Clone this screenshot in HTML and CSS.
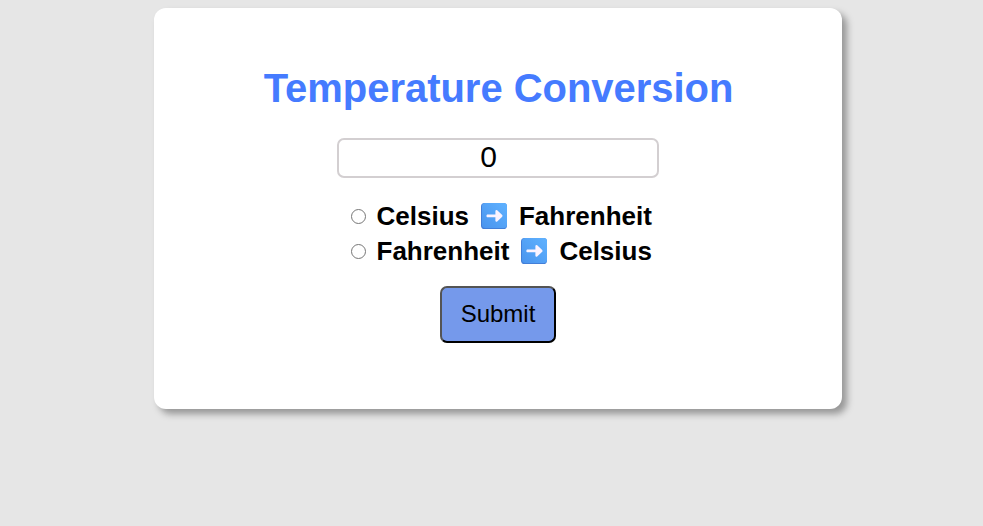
FILE: index.html
```html
<!DOCTYPE html>
<html lang="en">
<head>
<meta charset="UTF-8">
<title>Temperature Conversion</title>
<link rel="stylesheet" href="styles.css">
</head>
<body>
<svg class="defs" width="0" height="0" aria-hidden="true">
  <defs>
    <linearGradient id="tile" x1="1" y1="0" x2="0" y2="1">
      <stop offset="0" stop-color="#5fb2ff"/>
      <stop offset="1" stop-color="#4a94ee"/>
    </linearGradient>
    <symbol id="arrow" viewBox="0 0 26 26">
      <rect width="26" height="26" rx="3.6" fill="#437fd8"/>
      <rect x="1" width="25" height="25" rx="3.2" fill="url(#tile)"/>
      <path d="M6 11.5H14.4V8Q14.7 6.4 16.2 7.3L21.2 12.1Q21.9 12.9 21.2 13.7L16.2 18.5Q14.7 19.4 14.4 17.8V14.3H6Q4.6 12.9 6 11.5Z" fill="#fbf3ff"/>
    </symbol>
  </defs>
</svg>
<form class="card">
  <h1>Temperature Conversion</h1>
  <input class="value" type="number" value="0">
  <label class="option"><input type="radio" name="unit"><span>Celsius</span><svg class="arrow"><use href="#arrow"/></svg><span>Fahrenheit</span></label>
  <label class="option"><input type="radio" name="unit"><span>Fahrenheit</span><svg class="arrow"><use href="#arrow"/></svg><span>Celsius</span></label>
  <button type="button">Submit</button>
</form>
</body>
</html>
```
FILE: styles.css
```css
body {
  box-sizing: border-box;
  min-height: 100vh;
  margin: 0;
  padding-top: 8px;
  background: #e6e6e6;
  font-family: "Liberation Sans", Arial, sans-serif;
}
.defs { position: absolute; }
.card {
  box-sizing: border-box;
  width: 688px;
  height: 401px;
  margin: 0 auto 0 154px;
  padding-top: 57px;
  display: flex;
  flex-direction: column;
  align-items: center;
  background: #fff;
  border-radius: 12px;
  box-shadow: 5px 5px 7px rgba(0, 0, 0, 0.35);
}
h1 {
  margin: 0 0 27px;
  padding-left: 1px;
  font-size: 40px;
  line-height: 46px;
  letter-spacing: -0.04px;
  color: #457bff;
}
.value {
  box-sizing: border-box;
  width: 322px;
  height: 40px;
  margin: 0 0 21px;
  padding: 0 6px 2px 2px;
  border: 2px solid #d3cfd1;
  border-radius: 7px;
  font: 30px "Liberation Sans", Arial, sans-serif;
  text-align: center;
}
.option {
  box-sizing: border-box;
  display: flex;
  align-items: center;
  width: 307px;
  height: 35px;
  padding-left: 6px;
  font-size: 26px;
  font-weight: bold;
}
.option input {
  flex: none;
  width: 15px;
  height: 15px;
  margin: 0 11px 0 0;
}
.arrow {
  flex: none;
  width: 26px;
  height: 26px;
  margin: 0 12.3px 2px 11.7px;
}
button {
  box-sizing: border-box;
  width: 116px;
  height: 57px;
  margin-top: 17px;
  padding: 0 0 2px;
  border: 2px outset #000;
  border-radius: 7px;
  background: #7599eb;
  color: #000;
  font: 24px "Liberation Sans", Arial, sans-serif;
}
```
